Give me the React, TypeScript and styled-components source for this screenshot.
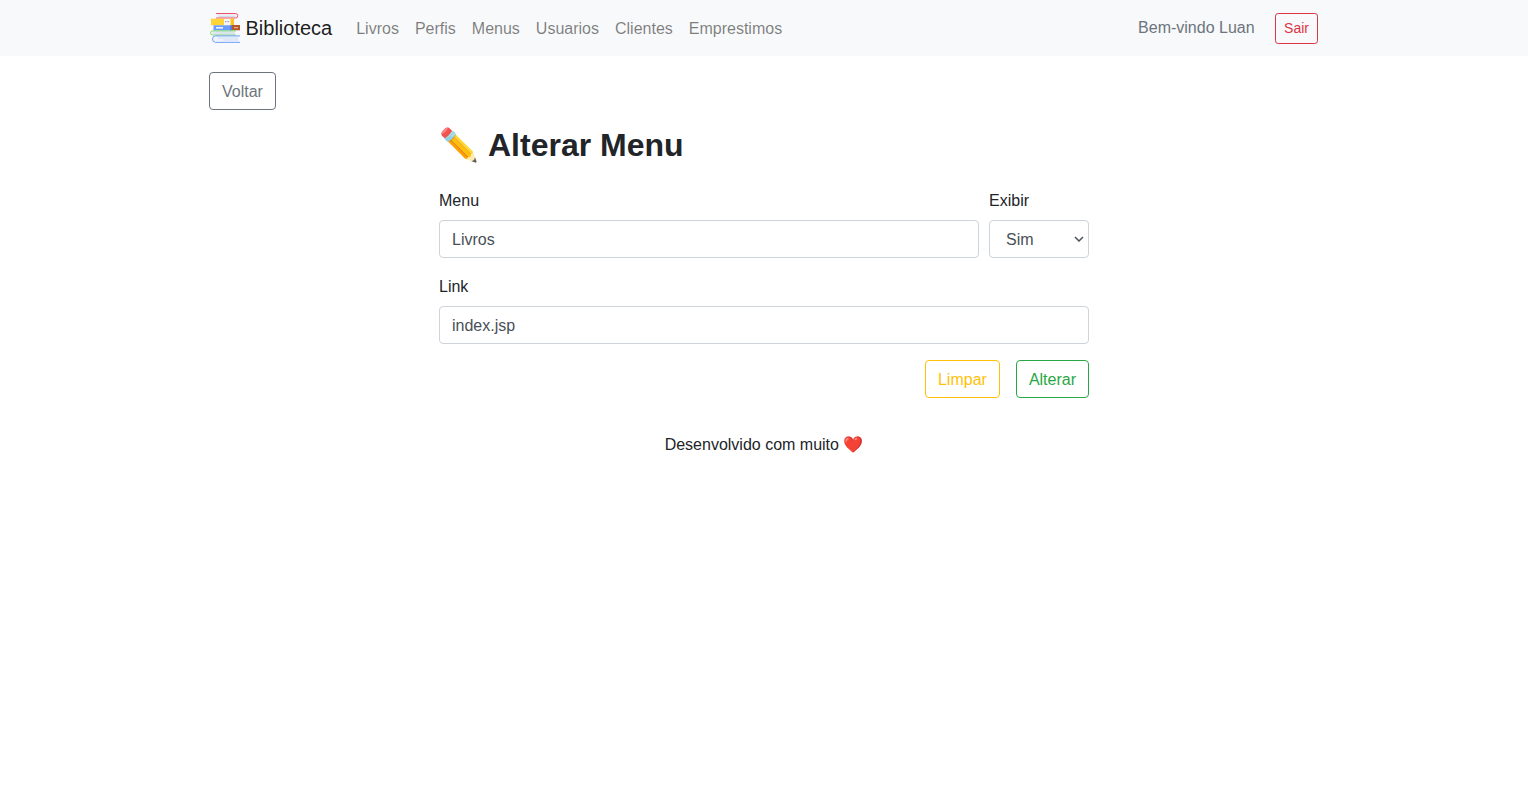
import React from "react";
import styled, { createGlobalStyle } from "styled-components";

const GlobalStyle = createGlobalStyle`
  *, *::before, *::after { box-sizing: border-box; }
  body {
    margin: 0;
    background: #fff;
    color: #212529;
    font: 400 16px/1.5 "Liberation Sans", Arial, "Noto Color Emoji", sans-serif;
  }
`;

const Navbar = styled.nav`
  background: #f8f9fa;
  height: 56px;
`;

const Container = styled.div`
  width: 1140px;
  margin: 0 auto;
  padding: 0 15px;
`;

const NavContent = styled(Container)`
  display: flex;
  align-items: center;
  height: 100%;
`;

const Brand = styled.a`
  display: flex;
  align-items: center;
  gap: 4.5px;
  margin-right: 16px;
  padding-left: 1px;
  font-size: 20px;
  line-height: 30px;
  color: rgba(0, 0, 0, 0.9);
`;

const NavList = styled.ul`
  display: flex;
  margin: 0 auto 0 0;
  padding: 0;
  list-style: none;
`;

const NavLink = styled.a`
  display: block;
  padding: 9px 8px 7px;
  color: rgba(0, 0, 0, 0.5);
`;

const Welcome = styled.span`
  margin-right: 20.5px;
  padding-bottom: 1px;
  color: #6c757d;
`;

const Button = styled.button<{ $color: string; $small?: boolean }>`
  border: 1px solid ${(p) => p.$color};
  border-radius: ${(p) => (p.$small ? "3.2px" : "4px")};
  padding: ${(p) => (p.$small ? "4px 8px" : "7px 12px 5px")};
  background: transparent;
  color: ${(p) => p.$color};
  font-family: inherit;
  font-size: ${(p) => (p.$small ? "14px" : "16px")};
  line-height: 1.5;
`;

const LogoutSlot = styled.div`
  display: flex;
  margin-right: 1px;
`;

const BackRow = styled.div`
  display: flex;
  padding: 16px 0;
`;

const Form = styled.form`
  width: 650px;
  margin: 0 auto;
`;

const Title = styled.h2`
  display: flex;
  gap: 9.2px;
  margin: 0 0 24px;
  font-size: 32px;
  font-weight: 700;
  line-height: 1.2;
`;

const TitleEmoji = styled.span`
  width: 39.8px;
  font-weight: 400;
`;

const FieldRow = styled.div`
  display: grid;
  grid-template-columns: 540px 100px;
  gap: 10px;
`;

const Field = styled.div`
  margin-bottom: 16px;
`;

const Label = styled.label`
  display: block;
  padding-top: 1px;
  margin-bottom: 7px;
`;

const Input = styled.input`
  display: block;
  width: 100%;
  height: 38px;
  padding: 7px 12px 5px;
  border: 1px solid #ced4da;
  border-radius: 4px;
  background: #fff;
  color: #495057;
  font: inherit;
`;

const SelectBox = styled.div`
  display: grid;
  align-items: center;

  > * {
    grid-area: 1 / 1;
  }
`;

const Select = styled.select`
  appearance: none;
  display: block;
  width: 100%;
  height: 38px;
  padding: 7px 16px 5px;
  border: 1px solid #ced4da;
  border-radius: 4px;
  background: #fff;
  color: #495057;
  font: inherit;
`;

const Chevron = styled.svg`
  justify-self: end;
  margin-right: 5px;
  pointer-events: none;
`;

const Actions = styled.div`
  display: flex;
  justify-content: flex-end;
  gap: 16px;
`;

const Footer = styled.footer`
  margin-top: 35px;
  text-align: center;
`;

const links = ["Livros", "Perfis", "Menus", "Usuarios", "Clientes", "Emprestimos"];

function BooksLogo() {
  return (
    <svg width="31" height="30" viewBox="0 0 31 30" fill="none" aria-hidden="true">
      <path d="M7 1h19v4H7z" fill="#e9edf5" />
      <path d="M9 3.5h16" stroke="#d3dcec" />
      <path d="M6 .5h19.5q2.3 0 2.3 2.2t-2.3 2.3H6" stroke="#f5506b" />
      <path d="M1 5.7h23v6.6H1z" fill="#ffd437" />
      <path d="M20.8 5.7H24v6.6h-3.2z" fill="#ffc01f" />
      <path d="M14 6h6.5v6H14z" fill="#f5f6fa" />
      <path d="M15 8.7h4.5" stroke="#858b9e" strokeDasharray="1 .6" />
      <path d="M3.5 12.3H22v5.2H3.5z" fill="#6a9bff" />
      <path d="M20 12.3h2v5.2h-2z" fill="#5080e1" />
      <path d="M6 14.8h7" stroke="#f0f4ff" strokeWidth="1.6" />
      <path d="M22 12h8v5.3h-8z" fill="#b5562b" />
      <path d="M24 14.7h4" stroke="#f2c29c" />
      <path d="M2 18h23v4H2z" fill="#e5eaf2" />
      <path d="M5 20h20" stroke="#d3deea" />
      <path d="M26 17.9H2.6Q.5 17.9.5 19.9t2.1 2.1H26" stroke="#83de78" />
      <path d="M4 23h25v6H4z" fill="#edf2fb" />
      <path d="M8 25h20M13 27h15" stroke="#d1def2" />
      <path d="M30 22.9H5.5Q2.5 22.9 2.5 26t3 3.4H30" stroke="#73a1fb" />
    </svg>
  );
}

export default function App() {
  return (
    <>
      <GlobalStyle />
      <Navbar>
        <NavContent>
          <Brand>
            <BooksLogo />
            Biblioteca
          </Brand>
          <NavList>
            {links.map((link) => (
              <li key={link}>
                <NavLink>{link}</NavLink>
              </li>
            ))}
          </NavList>
          <Welcome>Bem-vindo Luan</Welcome>
          <LogoutSlot>
            <Button $color="#dc3545" $small>Sair</Button>
          </LogoutSlot>
        </NavContent>
      </Navbar>
      <Container>
        <BackRow>
          <Button $color="#6c757d">Voltar</Button>
        </BackRow>
        <Form>
          <Title>
            <TitleEmoji>✏️</TitleEmoji>
            <span>Alterar Menu</span>
          </Title>
          <FieldRow>
            <Field>
              <Label htmlFor="menu">Menu</Label>
              <Input id="menu" defaultValue="Livros" />
            </Field>
            <Field>
              <Label htmlFor="exibir">Exibir</Label>
              <SelectBox>
                <Select id="exibir" defaultValue="Sim">
                  <option>Sim</option>
                  <option>Não</option>
                </Select>
                <Chevron width="10" height="6" viewBox="0 0 10 6" fill="none">
                  <path d="M1 1l4 4 4-4" stroke="#495057" strokeWidth="1.5" />
                </Chevron>
              </SelectBox>
            </Field>
          </FieldRow>
          <Field>
            <Label htmlFor="link">Link</Label>
            <Input id="link" defaultValue="index.jsp" />
          </Field>
          <Actions>
            <Button type="reset" $color="#ffc107">Limpar</Button>
            <Button type="button" $color="#28a745">Alterar</Button>
          </Actions>
        </Form>
        <Footer>Desenvolvido com muito ❤️</Footer>
      </Container>
    </>
  );
}
